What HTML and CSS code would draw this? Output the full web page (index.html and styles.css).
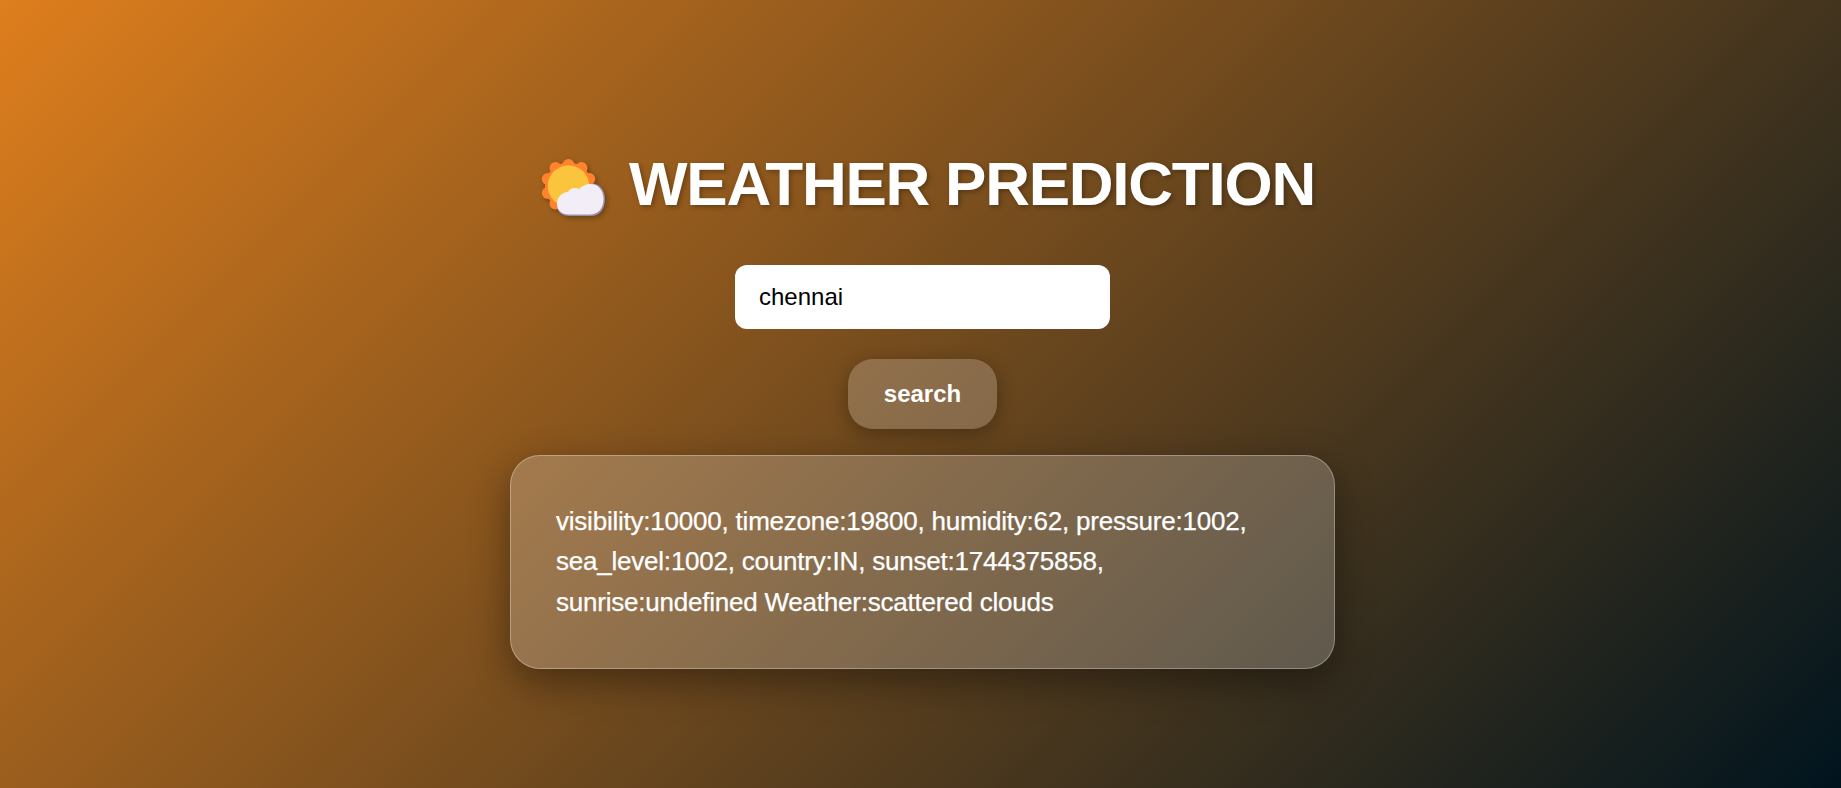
FILE: index.html
```html
<!DOCTYPE html>
<html lang="en">
<head>
<meta charset="utf-8">
<title>Weather Prediction</title>
<link rel="stylesheet" href="styles.css">
</head>
<body>
<main class="app">
  <h1 class="title">
    <svg class="title-icon" viewBox="0 0 66 60" aria-hidden="true">
      <g fill="#ff822d">
        <circle cx="26.500" cy="27" r="23.500"/>
        <circle cx="26.500" cy="6" r="6"/><circle cx="13.500" cy="9" r="6"/><circle cx="39.500" cy="9" r="6"/>
        <circle cx="5.800" cy="20" r="6"/><circle cx="47.200" cy="20" r="6"/><circle cx="5.800" cy="34" r="6"/>
        <circle cx="13.500" cy="44.500" r="6"/>
      </g>
      <circle cx="26.500" cy="27" r="20.700" fill="#fbc43d"/>
      <path fill="#9b8eac" d="M50 24.500C58 24.500 63 31 63 40C63 50 58 57 49 57H27C20 57 15 53 15 46Z"/>
      <path fill="#f3edf8" d="M26.500 55.500C19.500 55.500 15 51 15 45C15 38 20 33 26 33C28 28.500 33.500 28 37 30C40 27 44 25 48.500 25C56 25 61.500 31 61.500 40C61.500 49 56.500 55.500 48 55.500Z"/>
    </svg>
    <span>WEATHER PREDICTION</span>
  </h1>
  <input class="city" type="text" value="chennai" aria-label="City">
  <button class="search" type="button">search</button>
  <section class="result">
    <p class="result-text">visibility:10000, timezone:19800, humidity:62, pressure:1002, sea_level:1002, country:IN, sunset:1744375858, sunrise:undefined Weather:scattered clouds</p>
  </section>
</main>
</body>
</html>
```
FILE: styles.css
```css
* {
  box-sizing: border-box;
  margin: 0;
}
body {
  min-height: 100vh;
  background: linear-gradient(135deg, #de7e1d, #00141e);
  font-family: "Liberation Sans", Arial, sans-serif;
  color: #fff;
}
.app {
  display: flex;
  flex-direction: column;
  align-items: center;
  padding: 149px 0 0 4px;
}
.title {
  display: flex;
  align-items: center;
  gap: 21px;
  height: 70px;
  margin-bottom: 46px;
  padding-left: 12px;
  font-size: 62px;
  line-height: 70px;
  letter-spacing: -1.250px;
  white-space: nowrap;
  text-shadow: 2px 2px 5px rgba(0, 0, 0, 0.3);
}
.title-icon {
  width: 66px;
  height: 60px;
  margin-top: 9px;
  overflow: visible;
  filter: drop-shadow(2px 2px 2.500px rgba(0, 0, 0, 0.3));
}
.city {
  width: 375px;
  height: 64px;
  margin-bottom: 30px;
  padding: 0 24px;
  border: 0;
  border-radius: 12px;
  background: #fff;
  color: #000;
  font: 24px "Liberation Sans", Arial, sans-serif;
}
.search {
  width: 149px;
  height: 70px;
  margin-bottom: 26px;
  padding: 0;
  border: 0;
  border-radius: 25px;
  background: rgba(255, 255, 255, 0.2);
  box-shadow: 0 5px 19px rgba(0, 0, 0, 0.3);
  color: #fff;
  font: bold 24px "Liberation Sans", Arial, sans-serif;
}
.result {
  width: 825px;
  height: 214px;
  padding: 45px;
  border: 1px solid rgba(255, 255, 255, 0.3);
  border-radius: 30px;
  background: rgba(255, 255, 255, 0.21);
  box-shadow: 0 13px 38px rgba(0, 0, 0, 0.4);
}
.result-text {
  font-size: 26px;
  line-height: 40.400px;
  letter-spacing: -0.220px;
  -webkit-text-stroke: 0.250px #fff;
}
```
